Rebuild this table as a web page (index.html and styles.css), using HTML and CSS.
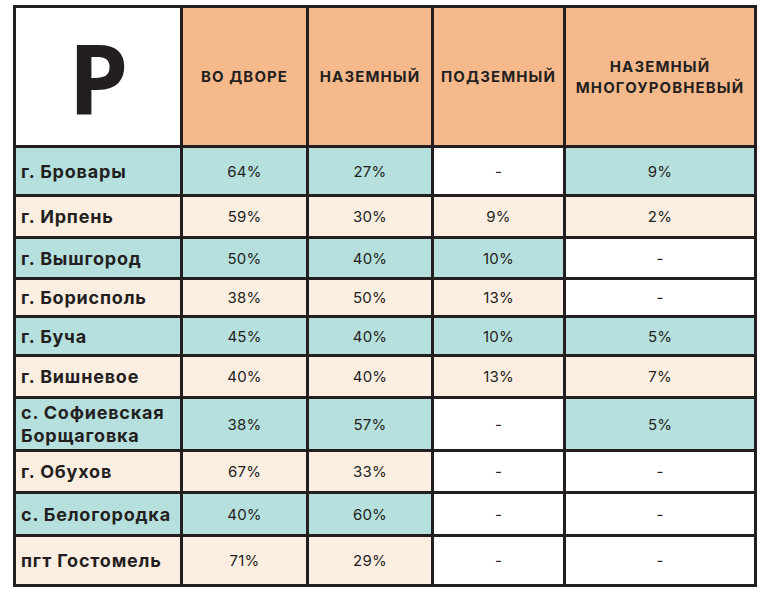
FILE: index.html
```html
<!DOCTYPE html>
<html lang="ru">
<head>
<meta charset="utf-8">
<link rel="stylesheet" href="styles.css">
</head>
<body>
<div class="table">
  <div class="cell corner">P</div>
  <div class="cell head">ВО ДВОРЕ</div>
  <div class="cell head">НАЗЕМНЫЙ</div>
  <div class="cell head">ПОДЗЕМНЫЙ</div>
  <div class="cell head">НАЗЕМНЫЙ<br>МНОГОУРОВНЕВЫЙ</div>

  <div class="cell label teal">г. Бровары</div>
  <div class="cell num teal">64%</div>
  <div class="cell num teal">27%</div>
  <div class="cell num white">-</div>
  <div class="cell num teal">9%</div>

  <div class="cell label peach">г. Ирпень</div>
  <div class="cell num peach">59%</div>
  <div class="cell num peach">30%</div>
  <div class="cell num peach">9%</div>
  <div class="cell num peach">2%</div>

  <div class="cell label teal">г. Вышгород</div>
  <div class="cell num teal">50%</div>
  <div class="cell num teal">40%</div>
  <div class="cell num teal">10%</div>
  <div class="cell num white">-</div>

  <div class="cell label peach">г. Борисполь</div>
  <div class="cell num peach">38%</div>
  <div class="cell num peach">50%</div>
  <div class="cell num peach">13%</div>
  <div class="cell num white">-</div>

  <div class="cell label teal">г. Буча</div>
  <div class="cell num teal">45%</div>
  <div class="cell num teal">40%</div>
  <div class="cell num teal">10%</div>
  <div class="cell num teal">5%</div>

  <div class="cell label peach">г. Вишневое</div>
  <div class="cell num peach">40%</div>
  <div class="cell num peach">40%</div>
  <div class="cell num peach">13%</div>
  <div class="cell num peach">7%</div>

  <div class="cell label teal">с. Софиевская<br>Борщаговка</div>
  <div class="cell num teal">38%</div>
  <div class="cell num teal">57%</div>
  <div class="cell num white">-</div>
  <div class="cell num teal">5%</div>

  <div class="cell label peach">г. Обухов</div>
  <div class="cell num peach">67%</div>
  <div class="cell num peach">33%</div>
  <div class="cell num white">-</div>
  <div class="cell num white">-</div>

  <div class="cell label teal">с. Белогородка</div>
  <div class="cell num teal">40%</div>
  <div class="cell num teal">60%</div>
  <div class="cell num white">-</div>
  <div class="cell num white">-</div>

  <div class="cell label peach">пгт Гостомель</div>
  <div class="cell num peach">71%</div>
  <div class="cell num peach">29%</div>
  <div class="cell num white">-</div>
  <div class="cell num white">-</div>
</div>
</body>
</html>
```

FILE: styles.css
```css
html, body {
  margin: 0;
  padding: 0;
  background: #ffffff;
}

body {
  font-family: Inter, "Open Sans", sans-serif;
  color: #231f20;
}

.table {
  display: grid;
  grid-template-columns: 164px 123px 122px 129px 188px;
  grid-template-rows: 137px 46px 39px 38px 35px 36px 39px 50px 39px 40px 47px;
  gap: 3px;
  padding: 3px;
  background: #231f20;
  width: max-content;
  margin: 5px 0 0 13px;
}

.cell {
  display: flex;
  align-items: center;
  justify-content: center;
  text-align: center;
}

.corner {
  background: #ffffff;
  font-family: "Open Sans", sans-serif;
  font-size: 96px;
  font-weight: 700;
  line-height: 1;
  padding-top: 2px;
  padding-left: 1px;
}

.head {
  background: #f6b98b;
  font-size: 15px;
  font-weight: 700;
  line-height: 21px;
  letter-spacing: 1.1px;
}

.label {
  justify-content: flex-start;
  text-align: left;
  padding-left: 5px;
  font-size: 18px;
  font-weight: 700;
  line-height: 23px;
  letter-spacing: 0.8px;
}

.num {
  font-size: 15px;
  font-weight: 400;
  letter-spacing: 0.2px;
}

.teal { background: #b6e0de; }
.peach { background: #fdeee2; }
.white { background: #ffffff; }
```
